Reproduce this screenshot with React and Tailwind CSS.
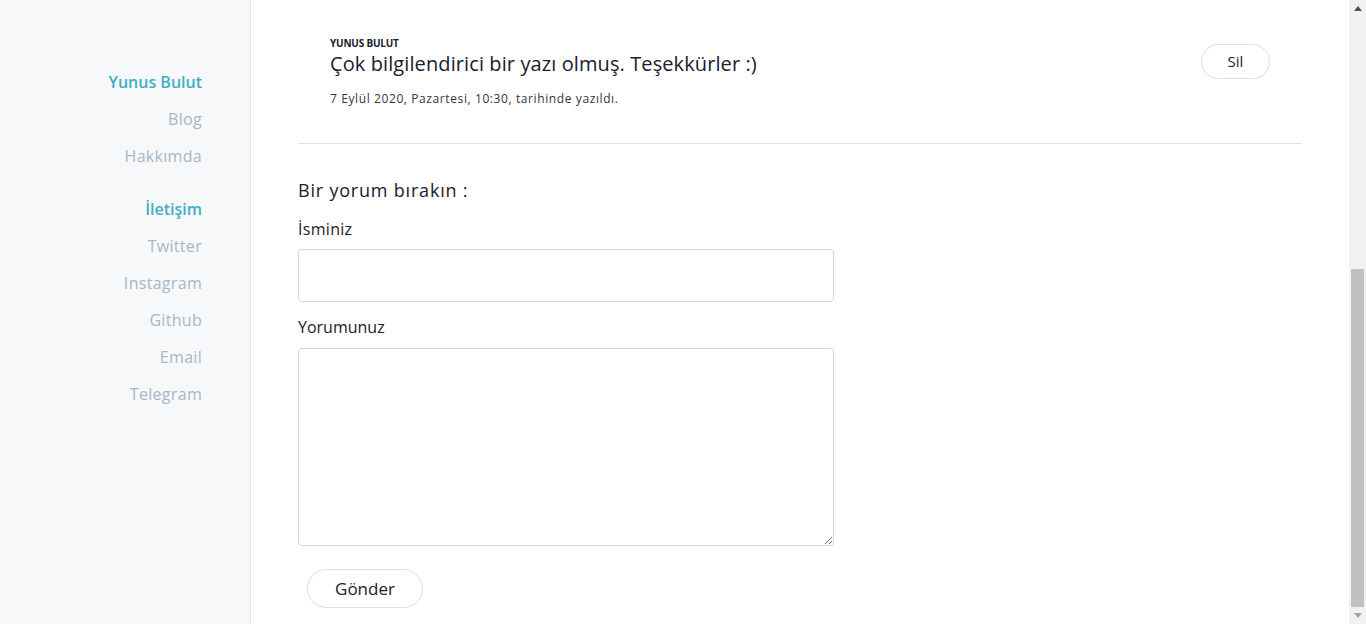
import React from "react";

const font = { fontFamily: "'Open Sans', 'Noto Sans', sans-serif" };

function NavLink({ children }) {
  return (
    <a href="#" className="block text-[16px] leading-[37px] text-[#a9b6c6] tracking-[0.3px]">
      {children}
    </a>
  );
}

function Scrollbar() {
  return (
    <div className="w-[17px] shrink-0 h-screen bg-[#f1f1f1] flex flex-col">
      <div className="h-[17px] flex items-center justify-center">
        <svg width="8" height="5" viewBox="0 0 8 5">
          <polygon points="0,5 8,5 4,0" fill="#505050" />
        </svg>
      </div>
      <div className="flex-1 flex flex-col">
        <div className="h-[252px]" />
        <div className="h-[338px] mx-[2px] bg-[#c1c1c1]" />
      </div>
      <div className="h-[17px] flex items-center justify-center">
        <svg width="8" height="5" viewBox="0 0 8 5">
          <polygon points="0,0 8,0 4,5" fill="#a3a3a3" />
        </svg>
      </div>
    </div>
  );
}

export default function App() {
  return (
    <div className="flex h-screen w-full overflow-hidden bg-white text-[#1a202c]" style={font}>
      <aside className="w-[251px] shrink-0 h-screen bg-[#f6f8fa] border-r border-[#e2e6ea] pr-[48px] pt-[64px] text-right">
        <div className="text-[16px] leading-[37px] font-semibold text-[#40afc3]">Yunus Bulut</div>
        <NavLink>Blog</NavLink>
        <NavLink>Hakkımda</NavLink>
        <div className="mt-[16px] text-[16px] leading-[37px] font-semibold text-[#40afc3]">İletişim</div>
        <NavLink>Twitter</NavLink>
        <NavLink>Instagram</NavLink>
        <NavLink>Github</NavLink>
        <NavLink>Email</NavLink>
        <NavLink>Telegram</NavLink>
      </aside>
      <main className="flex-1 min-w-0 h-screen">
        <div className="px-[47px] pt-[36px] pb-[16px]">
          <div className="flex items-start justify-between pl-[32px] pr-[32px] pb-[36px] border-b border-[#dfe3e7]">
            <div>
              <div className="text-[10px] font-bold leading-[14px] tracking-[-0.2px] text-[#1a202c]">YUNUS BULUT</div>
              <div className="text-[20px] leading-[28px] text-[#1a202c] tracking-[0.1px]">Çok bilgilendirici bir yazı olmuş. Teşekkürler :)</div>
              <div className="text-[12px] leading-[16px] mt-[13px] text-[#2d3748] tracking-[0.6px]">7 Eylül 2020, Pazartesi, 10:30, tarihinde yazıldı.</div>
            </div>
            <button className="mt-[8px] w-[69px] h-[35px] rounded-full border border-[#d9dfe5] text-[15px] text-[#1a202c] bg-white">
              Sil
            </button>
          </div>
          <form className="w-[536px] pt-[34px]" onSubmit={(e) => e.preventDefault()}>
            <div className="text-[18px] leading-[24px] text-[#1a202c] tracking-[0.8px]">Bir yorum bırakın :</div>
            <label className="block mt-[16px] text-[16px] leading-[22px] text-[#1a202c] tracking-[0.3px]">İsminiz</label>
            <input className="block mt-[9px] w-full h-[53px] rounded-[4px] border border-[#d2d6dc] px-3 outline-none" />
            <label className="block mt-[14px] text-[16px] leading-[22px] text-[#1a202c]">Yorumunuz</label>
            <textarea className="block mt-[10px] w-full h-[198px] rounded-[4px] border border-[#d2d6dc] px-3 py-2 outline-none" />
            <button type="submit" className="mt-[23px] ml-[9px] w-[116px] h-[39px] rounded-full border border-[#d9dfe5] bg-white text-[17px] text-[#1a202c]">
              Gönder
            </button>
          </form>
        </div>
      </main>
      <Scrollbar />
    </div>
  );
}
